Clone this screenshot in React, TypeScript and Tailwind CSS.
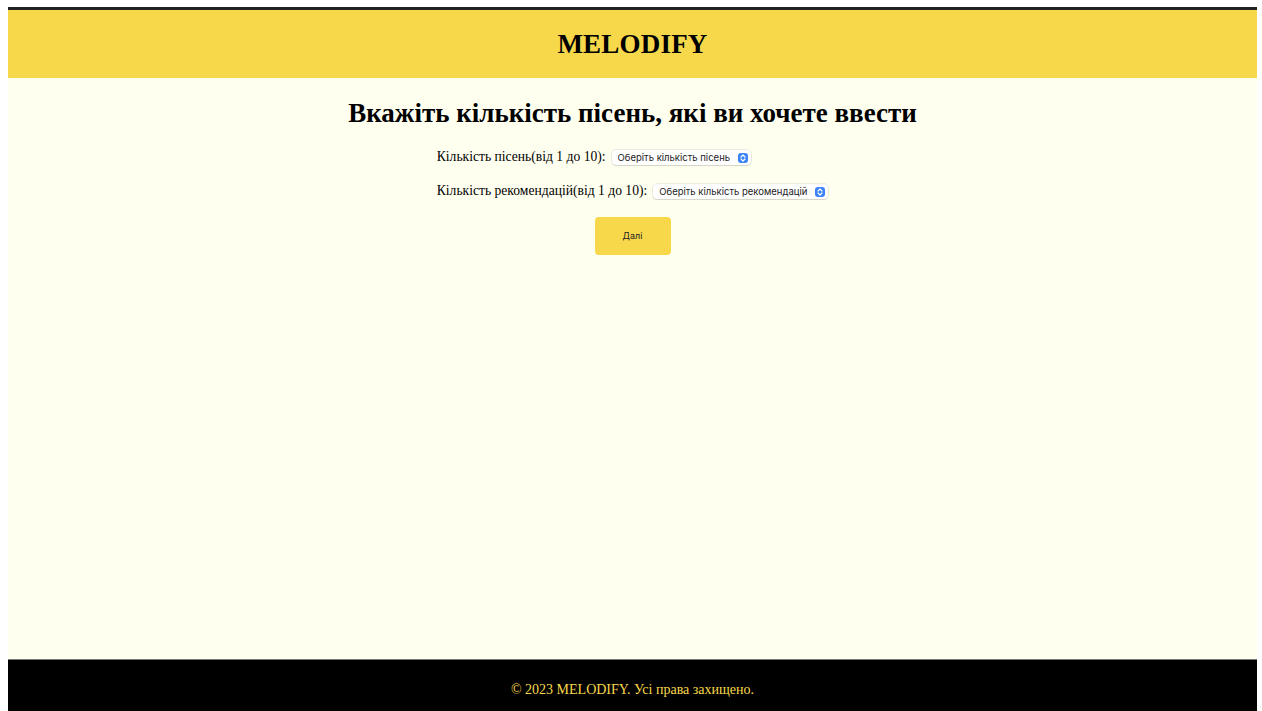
import { useState } from "react";

const counts = Array.from({ length: 10 }, (_, i) => i + 1);

function Stepper() {
  return (
    <span className="pointer-events-none absolute right-[3px] top-1/2 -translate-y-1/2 w-[10px] h-[10px] rounded-[3px] bg-[#3b82f6] flex items-center justify-center">
      <svg width="6" height="8" viewBox="0 0 6 8" fill="none">
        <path d="M1 3L3 1L5 3" stroke="white" strokeWidth="1.2" strokeLinecap="round" strokeLinejoin="round" />
        <path d="M1 5L3 7L5 5" stroke="white" strokeWidth="1.2" strokeLinecap="round" strokeLinejoin="round" />
      </svg>
    </span>
  );
}

function CountSelect({ placeholder }: { placeholder: string }) {
  const [value, setValue] = useState("");
  return (
    <span className="relative inline-flex">
      <select
        value={value}
        onChange={(e) => setValue(e.target.value)}
        className="appearance-none bg-white rounded-[4px] shadow-[0_0_0_0.5px_rgba(0,0,0,0.15),0_1px_1px_rgba(0,0,0,0.1)] h-[15px] pl-[6px] pr-[20px] text-[9.5px] leading-[15px] text-[#222] font-['Inter',sans-serif] outline-none"
      >
        <option value="">{placeholder}</option>
        {counts.map((n) => (
          <option key={n} value={n}>
            {n}
          </option>
        ))}
      </select>
      <Stepper />
    </span>
  );
}

export default function App() {
  return (
    <div className="min-h-screen flex flex-col bg-white pl-2 pr-[5px] pt-[7px] font-['Liberation_Serif',serif]">
      {/* шапка */}
      <header className="border-t-[3px] border-[#222] bg-[#f8d84b] h-[71px] flex items-center justify-center">
        <h1 className="text-[27px] font-bold text-black tracking-[0.2px]">MELODIFY</h1>
      </header>

      {/* основна частина */}
      <main className="flex-1 bg-[#fffff0] flex flex-col items-center pt-[19px]">
        <h2 className="text-[27px] font-bold text-black leading-[32px]">
          Вкажіть кількість пісень, які ви хочете ввести
        </h2>

        <div className="mt-[20px] flex flex-col items-start gap-[17px] text-[13.6px] text-black">
          <div className="flex items-center gap-[6px] h-[17px]">
            <span>Кількість пісень(від 1 до 10):</span>
            <CountSelect placeholder="Оберіть кількість пісень" />
          </div>
          <div className="flex items-center gap-[6px] h-[17px]">
            <span>Кількість рекомендацій(від 1 до 10):</span>
            <CountSelect placeholder="Оберіть кількість рекомендацій" />
          </div>
        </div>

        <button className="mt-[17px] w-[76px] h-[38px] rounded-[4px] bg-[#f8d84b] text-[9px] text-[#222] font-['Inter',sans-serif]">
          Далі
        </button>
      </main>

      {/* підвал */}
      <footer className="bg-black border-t border-[#777] h-[52px] flex items-center justify-center">
        <p className="text-[14px] text-[#f8d84b] pt-[8px]">© 2023 MELODIFY. Усі права захищено.</p>
      </footer>
    </div>
  );
}
